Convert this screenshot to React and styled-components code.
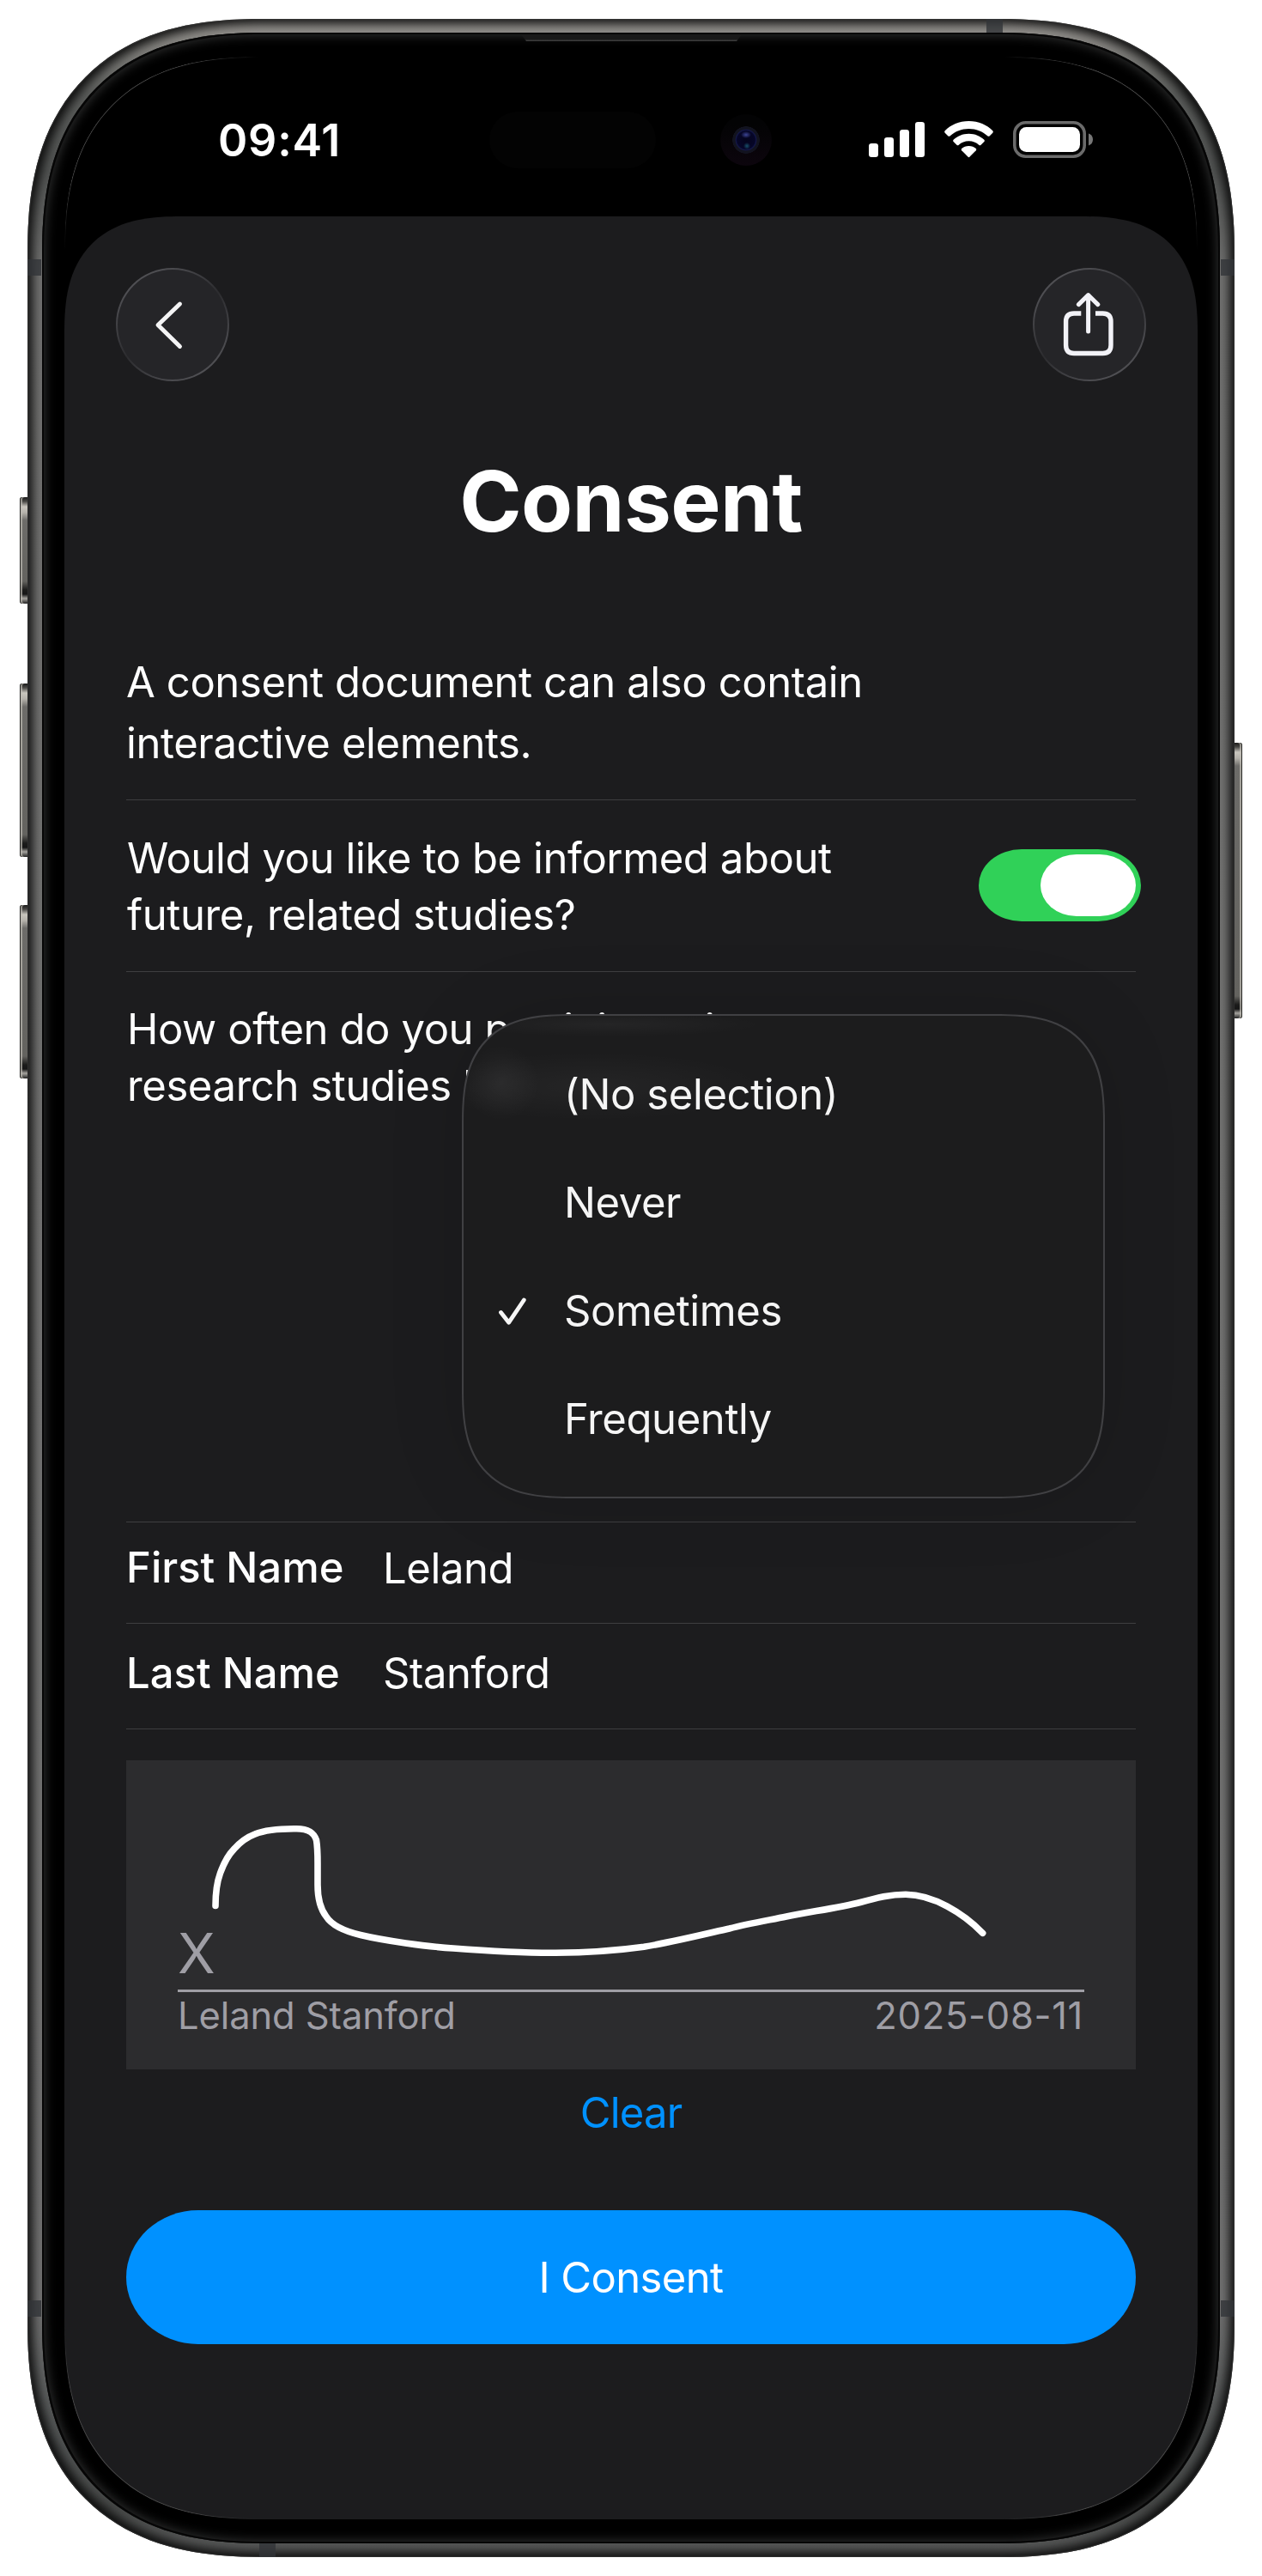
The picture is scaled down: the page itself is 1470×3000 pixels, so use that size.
import React, { useState } from "react";
import styled, { createGlobalStyle, css } from "styled-components";

const GlobalStyle = createGlobalStyle`
  * { box-sizing: border-box; }
  body { margin: 0; background: #fff; }
  button { font: inherit; color: inherit; border: 0; padding: 0; background: none; }
`;

const smooth = (radius, fallback, k = 1.29) => css`
  border-radius: ${fallback}px;
  @supports (corner-shape: superellipse(1.3)) {
    border-radius: ${radius}px;
    corner-shape: superellipse(${k});
  }
`;

/* ---------- Device ---------- */

const Stage = styled.div`
  width: 1470px;
  height: 3000px;
  padding: 22px 32px;
  background: #fff;
  font-family: Inter, "Liberation Sans", sans-serif;
  font-size: 49px;
  letter-spacing: -0.4px;
  color: #fff;
`;

const Phone = styled.div`
  position: relative;
  width: 1406px;
  height: 2956px;
  padding: 16px 17px 16px 17px;
  ${smooth(274, 238)}
  background: linear-gradient(
    180deg,
    #969490 0,
    #908e8a 0.6%,
    #5c5e5c 3%,
    #525453 6%,
    #717170 10%,
    #747473 50%,
    #717171 90%,
    #525555 95%,
    #484a49 98%,
    #5c5d5d 100%
  );
  box-shadow: inset 0 0 1px 1px rgba(60, 60, 60, 0.6), inset 0 0 12px 6px rgba(8, 8, 8, 0.92);
`;

const Bezel = styled.div`
  height: 2924px;
  padding: 28px 26px;
  ${smooth(258, 221)}
  background: #000;
  box-shadow: inset 0 0 0 2px #060606, inset 0 0 13px 3px #303131;
`;

const Screen = styled.div`
  position: relative;
  display: flex;
  flex-direction: column;
  height: 2868px;
  overflow: hidden;
  ${smooth(226, 195)}
  background: #000;

  &::after {
    content: "";
    position: absolute;
    inset: 0;
    ${smooth(226, 195)}
    border: 1px solid #484848;
    pointer-events: none;
    mask-image: linear-gradient(90deg, #000 140px, transparent 225px, transparent calc(100% - 225px), #000 calc(100% - 140px)),
      linear-gradient(180deg, #000 140px, transparent 225px, transparent calc(100% - 225px), #000 calc(100% - 140px));
    mask-composite: intersect;
  }
`;

const AntennaBand = styled.i`
  position: absolute;
  background: rgba(50, 53, 56, 0.8);
  ${(p) => (p.$edge === "top" || p.$edge === "bottom" ? "width: 19px; height: 16px;" : "width: 16px; height: 19px;")}
  ${(p) => p.$edge}: 0;
  ${(p) => (p.$edge === "top" || p.$edge === "bottom" ? `left: ${p.$at}px;` : `top: ${p.$at}px;`)}
`;

const SideButton = styled.i`
  position: absolute;
  top: ${(p) => p.$top}px;
  height: ${(p) => p.$height}px;
  width: 9px;
  ${(p) => p.$side}: -9px;
  border-radius: ${(p) => (p.$side === "left" ? "3px 0 0 3px" : "0 3px 3px 0")};
  background: linear-gradient(
    180deg,
    #1b1b1a 0,
    #4a4946 5px,
    #c9c6be 11px,
    #b5b2ab 18px,
    #6d6c69 27px,
    #64635f calc(100% - 26px),
    #1c1c1b calc(100% - 16px),
    #161616 calc(100% - 11px),
    #a5a39e calc(100% - 6px),
    #222 100%
  );
  box-shadow: inset ${(p) => (p.$side === "left" ? "1px" : "-1px")} 0 0 #2a2a28,
    inset ${(p) => (p.$side === "left" ? "3px" : "-3px")} 0 0 rgba(190, 187, 178, 0.7);
`;

const Speaker = styled.i`
  position: absolute;
  top: 18px;
  left: 575px;
  width: 257px;
  height: 8px;
  background: linear-gradient(#191919 6px, #3c3c3c 7px);
  clip-path: polygon(0 0, 100% 0, 251px 100%, 6px 100%);
`;

const Sensor = styled.i`
  position: absolute;
  top: 64px;
  left: 495px;
  width: 194px;
  height: 66px;
  border-radius: 33px;
  background: #030303;
`;

const Camera = styled.i`
  position: absolute;
  top: 67px;
  left: 764px;
  width: 60px;
  height: 60px;
  border-radius: 50%;
  background: radial-gradient(circle 4px at 31px 37px, #17506a, transparent),
    radial-gradient(ellipse 6px 4px at 30px 24px, #3d4596, transparent),
    radial-gradient(circle 16px at center, #04041c 0, #060628 65%, #14184a 74%, #12131f 80%, #12131f 97%, transparent 100%),
    linear-gradient(#030304 20%, #0c050d);
`;

/* ---------- Status bar ---------- */

const StatusBar = styled.header`
  display: flex;
  justify-content: space-between;
  align-items: flex-start;
  height: 186px;
  flex: none;
  padding: 67px 122px 0 179px;
`;

const Clock = styled.time`
  font-size: 52px;
  line-height: 62px;
  font-weight: 600;
  letter-spacing: 0.8px;
`;

const StatusIcons = styled.div`
  display: flex;
  align-items: flex-end;
  gap: 23px;
  padding-top: 8px;
`;

/* ---------- Sheet ---------- */

const Sheet = styled.main`
  flex: 1;
  ${smooth(136, 112, 1.37)}
  border-bottom-left-radius: 0;
  border-bottom-right-radius: 0;
  background: #1c1c1e;
`;

const Toolbar = styled.nav`
  display: flex;
  justify-content: space-between;
  padding: 60px 60px 0;
`;

const GlassButton = styled.button`
  display: grid;
  place-items: center;
  width: 132px;
  height: 132px;
  border: 2px solid transparent;
  border-radius: 50%;
  background: linear-gradient(#252528, #252528) padding-box,
    linear-gradient(145deg, #5a5a5e, #4a4a4e 22%, #2c2c2f 50%, #4a4a4e 78%, #58585c) border-box;
`;

const Title = styled.h1`
  margin: 80px 0 0;
  font-size: 98px;
  line-height: 120px;
  font-weight: 700;
  letter-spacing: -0.6px;
  text-align: center;
`;

const Form = styled.section`
  padding: 115px 72px 0;
`;

const Intro = styled.p`
  margin: 0;
  padding-bottom: 30px;
  line-height: 71px;
`;

const Block = styled.div`
  border-top: 1px solid #3e3e40;
`;

const Question = styled.p`
  margin: 0;
  padding-left: 1px;
  line-height: 66px;
`;

const ToggleBlock = styled(Block)`
  display: flex;
  justify-content: space-between;
  padding: 35px 0 32px;
`;

const Switch = styled.button`
  display: flex;
  justify-content: flex-end;
  width: 189px;
  height: 84px;
  margin: 22px -6px 0 0;
  padding: 6px;
  border-radius: 50px / 42px;
  background: #30d158;
  ${(p) => !p.$on && "justify-content: flex-start; background: #39393d;"}
`;

const Knob = styled.span`
  width: 111px;
  height: 72px;
  border-radius: 42px / 36px;
  background: #fff;
`;

const SelectBlock = styled(Block)`
  position: relative;
  height: 641px;
  padding-top: 34px;
`;

const Menu = styled.ul`
  position: absolute;
  left: 391px;
  top: 49px;
  width: 749px;
  height: 564px;
  margin: 0;
  padding: 29px 0 0;
  list-style: none;
  border: 2px solid #404043;
  ${smooth(128, 96, 1.45)}
  background: radial-gradient(ellipse 44px 44px at 44px 78px, rgba(255, 255, 255, 0.05), transparent),
    radial-gradient(ellipse 200px 40px at 150px 82px, rgba(255, 255, 255, 0.04), transparent),
    radial-gradient(ellipse 180px 14px at 170px 10px, rgba(255, 255, 255, 0.04), transparent),
    #1c1c1d;
  box-shadow: 0 0 90px rgba(0, 0, 0, 0.12);
  color: #f5f5f5;
`;

const Option = styled.li`
  display: grid;
  grid-template-columns: 78px 1fr;
  align-items: center;
  height: 126px;
  padding-left: 39px;
  line-height: 66px;
`;

const Field = styled(Block)`
  display: grid;
  grid-template-columns: 299px 1fr;
  align-items: center;
  height: ${(p) => p.$height}px;
  padding-bottom: ${(p) => p.$lift}px;
`;

const Label = styled.label`
  font-weight: 500;
  letter-spacing: 0;
`;

const Value = styled.span`
  padding-top: 1px;
`;

const SignatureBlock = styled(Block)`
  padding-top: 36px;
`;

const Pad = styled.div`
  position: relative;
  height: 360px;
  padding: 186px 60px 0;
  background: #2c2c2e;
  color: #9f9ea5;
`;

const Stroke = styled.svg`
  position: absolute;
  inset: 0;
`;

const Mark = styled.div`
  font-size: 64px;
  line-height: 78px;
`;

const SignatureLine = styled.div`
  display: flex;
  justify-content: space-between;
  margin-top: 3px;
  border-top: 3px solid #9f9ea5;
  font-size: 43.5px;
  line-height: 54px;
  letter-spacing: -0.1px;
`;

const SignedOn = styled.time`
  margin-right: 1px;
  letter-spacing: 0.7px;
`;

const ClearButton = styled.button`
  display: block;
  margin: 18px auto 0;
  line-height: 66px;
  letter-spacing: -0.8px;
  color: #0091ff;
`;

const ConsentButton = styled.button`
  display: block;
  width: 100%;
  height: 156px;
  margin-top: 80px;
  padding-top: 2px;
  border-radius: 84px / 78px;
  background: #0091ff;
  line-height: 154px;
  letter-spacing: -0.6px;
  text-align: center;
`;

const OPTIONS = ["(No selection)", "Never", "Sometimes", "Frequently"];
const FIELDS = [
  { label: "First Name", value: "Leland", height: 118, lift: 12 },
  { label: "Last Name", value: "Stanford", height: 123, lift: 8 },
];

const SIGNATURE =
  "M104 169.5C104 158 105 144 109.5 131.5C114 119 119 110 126 103C134 94 142 89 150 86C162 81 180 79.5 198.5 79.7" +
  "C213 79.8 219 85 221.5 93C223 102 223 110 223 120V145C223 158 226 173 233 182C240 193 254 199 273 203.5" +
  "C300 210 350 217 381 219C420 222 460 224.5 500 224.3C550 224 580 220.5 603 217.3C640 211 680 201 702.5 196" +
  "C725 190 750 186 769 182C795 176.5 830 172 855 165.5C875 160 890 156.3 908 156.3C940 156.5 975 178 997.7 201.3";

export default function App() {
  const [on, setOn] = useState(true);
  const [selected, setSelected] = useState("Sometimes");

  return (
    <>
      <GlobalStyle />
      <Stage>
        <Phone>
          <SideButton $side="left" $top={557} $height={124} />
          <SideButton $side="left" $top={774} $height={202} />
          <SideButton $side="left" $top={1032} $height={202} />
          <SideButton $side="right" $top={843} $height={321} />
          <AntennaBand $edge="top" $at={1117} />
          <AntennaBand $edge="left" $at={280} />
          <AntennaBand $edge="right" $at={280} />
          <AntennaBand $edge="left" $at={2657} />
          <AntennaBand $edge="right" $at={2657} />
          <AntennaBand $edge="bottom" $at={270} />
          <Bezel>
            <Speaker />
            <Screen>
              <Sensor />
              <Camera />
              <StatusBar>
                <Clock>09:41</Clock>
                <StatusIcons>
                  <svg width="65" height="43" viewBox="0 0 65 43" fill="#fff">
                    <rect x="0" y="26" width="11" height="16" rx="3.3" />
                    <rect x="18" y="19" width="11" height="23" rx="3.3" />
                    <rect x="36" y="10" width="11" height="32" rx="3.3" />
                    <rect x="54" y="1" width="11" height="41" rx="3.3" />
                  </svg>
                  <svg width="57" height="43" viewBox="0 0 57 43" fill="#fff">
                    <path d="M28.5 0C39.8 0 49.5 4.5 56.3 11.2Q57.4 12.5 56.3 13.7L52.8 17.3Q51.5 18.4 50.3 17.3C44.3 12 37 9 28.5 9S12.7 12 6.7 17.3Q5.5 18.4 4.2 17.3L.7 13.7Q-.4 12.5 .7 11.2C7.5 4.5 17.2 0 28.5 0Z" />
                    <path d="M28.5 14.7C35.7 14.7 41.8 17.5 46.4 21.7Q47.5 22.9 46.4 24L42.6 27.8Q41.5 28.8 40.2 27.8C37 25 33.2 23.3 28.5 23.3S20 25 16.8 27.8Q15.5 28.8 14.4 27.8L10.6 24Q9.5 22.9 10.6 21.7C15.2 17.5 21.3 14.7 28.5 14.7Z" />
                    <path d="M28.5 29C31.8 29 34.6 30.1 36.8 32Q37.9 33 36.8 34.2L29.6 41.6Q28.5 42.7 27.4 41.6L20.2 34.2Q19.1 33 20.2 32C22.4 30.1 25.2 29 28.5 29Z" />
                  </svg>
                  <svg width="93" height="43" viewBox="0 0 93 43">
                    <rect x="1.8" y="1.8" width="81.4" height="39.4" rx="13" fill="none" stroke="#6b6b6b" strokeWidth="3.6" />
                    <rect x="7" y="7" width="71" height="29" rx="8.5" fill="#fff" />
                    <path d="M88 14.5C91 15.5 93 18 93 21.5S91 27.5 88 28.5Z" fill="#777" />
                  </svg>
                </StatusIcons>
              </StatusBar>
              <Sheet>
                <Toolbar>
                  <GlassButton aria-label="Back">
                    <svg width="128" height="128" viewBox="2 2 128 128" fill="none" stroke="#f4f4f5" strokeWidth="4.9" strokeLinecap="round" strokeLinejoin="round">
                      <path d="M74.5 42L49 66.5L74.5 91.5" />
                    </svg>
                  </GlassButton>
                  <GlassButton aria-label="Share">
                    <svg width="128" height="128" viewBox="2 2 128 128" fill="none" stroke="#f2f2f7" strokeWidth="5">
                      <path d="M64.6 32V74M53.4 42.6L64.6 31.6L75.8 42.6" strokeLinecap="round" strokeLinejoin="round" />
                      <path d="M56.3 53H48Q38.6 53 38.6 62.5V90Q38.6 99.5 48 99.5H81.5Q91 99.5 91 90V62.5Q91 53 81.5 53H73" strokeWidth="5.4" />
                    </svg>
                  </GlassButton>
                </Toolbar>
                <Title>Consent</Title>
                <Form>
                  <Intro>
                    A consent document can also contain
                    <br />
                    interactive elements.
                  </Intro>
                  <ToggleBlock>
                    <Question>
                      Would you like to be informed about
                      <br />
                      future, related studies?
                    </Question>
                    <Switch $on={on} role="switch" aria-checked={on} onClick={() => setOn(!on)}>
                      <Knob />
                    </Switch>
                  </ToggleBlock>
                  <SelectBlock>
                    <Question>
                      How often do you participate in
                      <br />
                      research studies like
                    </Question>
                    <Menu>
                      {OPTIONS.map((option) => (
                        <Option key={option} onClick={() => setSelected(option)}>
                          <svg width="36" height="36" viewBox="0 0 36 36" fill="none" stroke="#f5f5f5" strokeWidth="4.8" strokeLinecap="round" strokeLinejoin="round">
                            {option === selected && <path d="M4.5 19.5L13.7 31.2L31.3 5" />}
                          </svg>
                          {option}
                        </Option>
                      ))}
                    </Menu>
                  </SelectBlock>
                  {FIELDS.map((field) => (
                    <Field key={field.label} $height={field.height} $lift={field.lift}>
                      <Label>{field.label}</Label>
                      <Value>{field.value}</Value>
                    </Field>
                  ))}
                  <SignatureBlock>
                    <Pad>
                      <Stroke width="1176" height="360" viewBox="0 0 1176 360" fill="none" stroke="#fff" strokeWidth="7.6" strokeLinecap="round">
                        <path d={SIGNATURE} />
                      </Stroke>
                      <Mark>X</Mark>
                      <SignatureLine>
                        <span>Leland Stanford</span>
                        <SignedOn>2025-08-11</SignedOn>
                      </SignatureLine>
                    </Pad>
                  </SignatureBlock>
                  <ClearButton>Clear</ClearButton>
                  <ConsentButton>I Consent</ConsentButton>
                </Form>
              </Sheet>
            </Screen>
          </Bezel>
        </Phone>
      </Stage>
    </>
  );
}
